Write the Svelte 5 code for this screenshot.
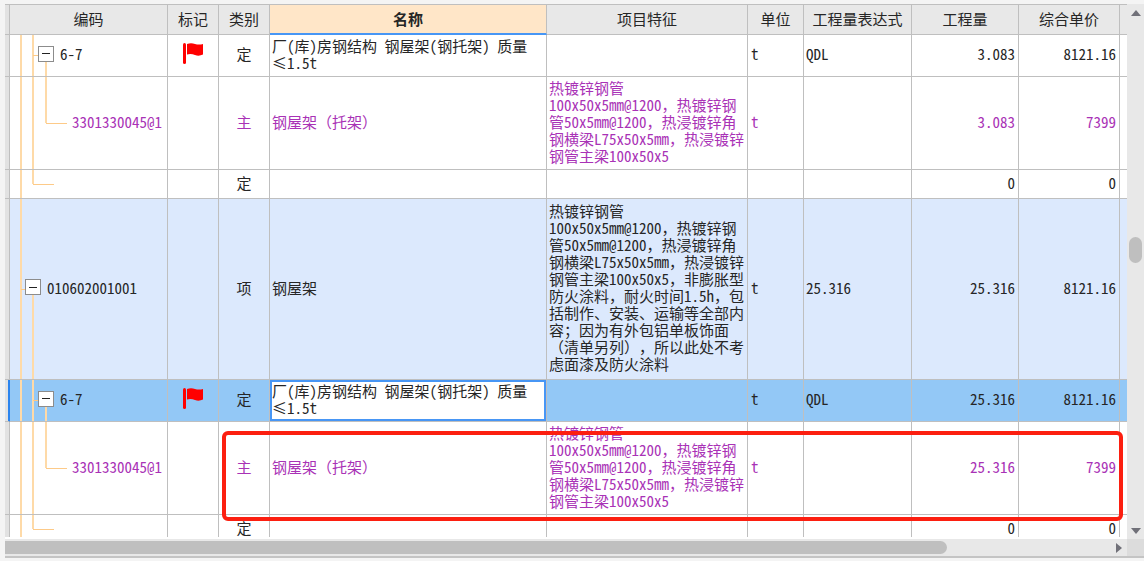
<script>
  const steel = [
    "热镀锌钢管",
    "100x50x5mm@1200，热镀锌钢",
    "管50x5mm@1200，热浸镀锌角",
    "钢横梁L75x50x5mm，热浸镀锌",
    "钢管主梁100x50x5",
  ];

  const steelFull = [
    ...steel.slice(0, 4),
    "钢管主梁100x50x5，非膨胀型",
    "防火涂料，耐火时间1.5h，包",
    "括制作、安装、运输等全部内",
    "容；因为有外包铝单板饰面",
    "（清单另列），所以此处不考",
    "虑面漆及防火涂料",
  ];

  const quota = ["厂(库)房钢结构 钢屋架(钢托架) 质量", "≤1.5t"];

  const columns = [
    { key: "code", label: "编码" },
    { key: "mark", label: "标记" },
    { key: "kind", label: "类别" },
    { key: "name", label: "名称" },
    { key: "feature", label: "项目特征" },
    { key: "unit", label: "单位" },
    { key: "expr", label: "工程量表达式" },
    { key: "amount", label: "工程量" },
    { key: "price", label: "综合单价" },
  ];

  let selected = $state(4);

  const rows = [
    { tree: "group", code: "6-7", flag: true, kind: "定", name: quota, feature: [], unit: "t", expr: "QDL", amount: "3.083", price: "8121.16" },
    { tree: "leaf", code: "3301330045@1", kind: "主", name: ["钢屋架（托架）"], feature: steel, unit: "t", expr: "", amount: "3.083", price: "7399" },
    { tree: "end", code: "", kind: "定", name: [], feature: [], unit: "", expr: "", amount: "0", price: "0" },
    { tree: "root", code: "010602001001", kind: "项", name: ["钢屋架"], feature: steelFull, unit: "t", expr: "25.316", amount: "25.316", price: "8121.16" },
    { tree: "group", code: "6-7", flag: true, kind: "定", name: quota, feature: [], unit: "t", expr: "QDL", amount: "25.316", price: "8121.16" },
    { tree: "leaf", code: "3301330045@1", kind: "主", name: ["钢屋架（托架）"], feature: steel, unit: "t", expr: "", amount: "25.316", price: "7399" },
    { tree: "end", code: "", kind: "定", name: [], feature: [], unit: "", expr: "", amount: "0", price: "0" },
  ];

  // x1, y1, x2, y2 of the guide lines in the code column
  const guides = {
    root: [[11, "0", 11, "100%"], [11, "50%", 16, "50%"], [23, "50%", 23, "100%"]],
    group: [[11, "0", 11, "100%"], [23, "0", 23, "100%"], [23, "50%", 28, "50%"], [36, "50%", 36, "100%"]],
    leaf: [[11, "0", 11, "100%"], [23, "0", 23, "100%"], [36, "0", 36, "50%"], [36, "50%", 57, "50%"]],
    end: [[11, "0", 11, "100%"], [23, "0", 23, "50%"], [23, "50%", 44, "50%"]],
  };

  // latin runs are set half width, chinese and its punctuation stay full width
  function runs(line) {
    return line.match(/[\x20-\x7e]+|[^\x20-\x7e]+/g) ?? [];
  }
</script>

{#snippet lines(list)}
  {#each list as line}
    <div class="line">{#each runs(line) as run}<span class:half={run.charCodeAt(0) < 127}>{run}</span>{/each}</div>
  {/each}
{/snippet}

<main class="app">
  <div class="body">
    <div class="pane">
      <table>
        <colgroup>
          <col class="w-gutter" />
          {#each columns as col}
            <col class="w-{col.key}" />
          {/each}
          <col class="w-rest" />
        </colgroup>
        <thead>
          <tr>
            <th class="gutter"></th>
            {#each columns as col}
              <th class:active={col.key === "name"}>{col.label}</th>
            {/each}
            <th></th>
          </tr>
        </thead>
        <tbody>
          {#each rows as row, i}
            <tr class={row.tree} class:selected={selected === i} onclick={() => (selected = i)}>
              <td class="gutter"></td>
              <td class="code half">
                <svg class="guides" aria-hidden="true">
                  {#each guides[row.tree] as [x1, y1, x2, y2]}
                    <line {x1} {y1} {x2} {y2} class:upright={x1 === x2} />
                  {/each}
                </svg>
                <div class="node">
                  {#if row.tree === "group" || row.tree === "root"}
                    <button class="toggle" type="button" aria-label="折叠"></button>
                  {/if}
                  <span>{row.code}</span>
                </div>
              </td>
              <td class="center">
                {#if row.flag}
                  <svg class="flag" viewBox="0 0 20 21" aria-hidden="true">
                    <path d="M0 1.500Q0 0 1.500 0Q3 0 3 1.500V19.500Q3 21 1.500 21Q0 21 0 19.500Z" />
                    <path d="M4 1Q8 -0.500 12 1Q16 2 20 1V11.500Q16 13.500 12 12Q8 10.500 4 11.500Z" />
                  </svg>
                {/if}
              </td>
              <td class="center">{row.kind}</td>
              <td class="name">{@render lines(row.name)}</td>
              <td>{@render lines(row.feature)}</td>
              <td class="unit half">{row.unit}</td>
              <td class="half">{row.expr}</td>
              <td class="number half">{row.amount}</td>
              <td class="number half">{row.price}</td>
              <td></td>
            </tr>
          {/each}
        </tbody>
      </table>
      <div class="highlight"></div>
    </div>
    <div class="vbar">
      <button type="button" aria-label="向上"><svg viewBox="0 0 10 6"><path d="M0 6L5 0L10 6Z" /></svg></button>
      <div class="vtrack"><div class="vthumb"></div></div>
      <button type="button" aria-label="向下"><svg viewBox="0 0 10 6"><path d="M0 0L5 6L10 0Z" /></svg></button>
    </div>
  </div>
  <div class="hbar">
    <div class="htrack">
      <div class="hthumb"></div>
      <button type="button" aria-label="向右"><svg class="right" viewBox="0 0 6 10"><path d="M0 0L6 5L0 10Z" /></svg></button>
    </div>
    <div class="corner"></div>
  </div>
</main>

<style>
  :global(body) {
    margin: 0;
    background: #f4f4f4;
  }

  .app {
    display: flex;
    flex-direction: column;
    height: 100vh;
    box-sizing: border-box;
    padding: 4px 0 3px 5px;
    font-family: "Noto Sans CJK SC", sans-serif;
    font-size: 15px;
    line-height: 17px;
    text-spacing-trim: space-all;
    color: #262626;
  }

  .body {
    flex: 1;
    min-height: 0;
    display: flex;
  }

  .pane {
    position: relative;
    flex: 1;
    overflow: hidden;
    box-sizing: border-box;
    border-top: 1px solid #bfbfbf;
    border-bottom: 2px solid #fff;
    background: #fff;
  }

  table {
    width: 100%;
    table-layout: fixed;
    border-collapse: separate;
    border-spacing: 0;
  }

  .w-gutter { width: 5px; }
  .w-code { width: 158px; }
  .w-mark,
  .w-kind { width: 51px; }
  .w-feature { width: 201px; }
  .w-unit { width: 56px; }
  .w-expr { width: 108px; }
  .w-amount { width: 107px; }
  .w-price { width: 101px; }
  .w-rest { width: 7px; }

  th,
  td {
    box-sizing: border-box;
    padding: 0 3px 4px 2px;
    border-right: 1px solid #bfbfbf;
    border-bottom: 1px solid #bfbfbf;
    text-align: left;
    vertical-align: middle;
    white-space: nowrap;
  }

  th:last-child,
  td:last-child {
    border-right: 0;
    padding: 0;
  }

  th {
    height: 30px;
    padding: 0 0 2px;
    background: #e8e8e8;
    font-weight: normal;
    text-align: center;
  }

  th.active {
    background: #ffe6c8;
    border-bottom: 2px solid #4796f5;
    font-weight: bold;
  }

  .gutter {
    padding: 0;
    background: #e2e2e2;
  }

  .group td { height: 42px; }
  .leaf td { height: 93px; }
  .end td { height: 29px; }
  .root td { height: 181px; }

  .leaf {
    color: #a932b6;
  }

  .root td:not(.gutter) {
    background: #dce9fd;
  }

  .selected td:not(.gutter) {
    background: #93c8f6;
  }

  .selected .gutter {
    border-right-color: #2b84ee;
    box-shadow: inset -1px 0 #2b84ee;
  }

  .selected td.name {
    background: #fff;
    box-shadow: inset 0 0 0 2px #4796f5;
  }

  .half {
    font-feature-settings: "hwid";
  }

  .line {
    white-space: pre;
  }

  .center {
    padding: 0 0 4px;
    text-align: center;
  }

  .number {
    text-align: right;
  }

  .unit {
    padding-left: 3px;
  }

  .code {
    position: relative;
    padding: 0 0 4px;
  }

  .guides {
    position: absolute;
    inset: 0;
    width: 100%;
    height: 100%;
  }

  .guides line {
    stroke: #fdca88;
    stroke-width: 1;
    shape-rendering: crispEdges;
  }

  .guides line.upright {
    stroke: #fedaa8;
    stroke-width: 2;
  }

  .node {
    position: relative;
    display: flex;
    align-items: center;
    gap: 6px;
  }

  .root .node { padding-left: 15px; }
  .group .node { padding-left: 28px; }
  .leaf .node { padding-left: 62px; }

  .toggle {
    display: flex;
    align-items: center;
    justify-content: center;
    width: 16px;
    height: 16px;
    padding: 0;
    border: 1px solid #8c8c8c;
    background: #fff;
  }

  .toggle::before {
    content: "";
    width: 8px;
    height: 1px;
    background: #222;
  }

  .flag {
    display: block;
    width: 20px;
    height: 21px;
    margin: 0 auto;
    fill: #f00;
  }

  .highlight {
    position: absolute;
    top: 426px;
    left: 217px;
    right: 4px;
    height: 90px;
    box-sizing: border-box;
    border: 4px solid #fc1f10;
    border-radius: 6px;
    pointer-events: none;
  }

  .vbar {
    display: flex;
    flex-direction: column;
    width: 17px;
    background: #e8e8e8;
  }

  .vtrack {
    flex: 1;
    display: flex;
    flex-direction: column;
    align-items: center;
  }

  .vtrack::before {
    content: "";
    flex: 5;
  }

  .vtrack::after {
    content: "";
    flex: 6;
  }

  .vthumb {
    width: 13px;
    height: 26px;
    border-radius: 7px;
    background: #bfbfbf;
  }

  .vbar button,
  .hbar button {
    display: flex;
    align-items: center;
    justify-content: center;
    width: 17px;
    height: 17px;
    padding: 0;
    border: 0;
    background: none;
  }

  button svg {
    width: 10px;
    height: 6px;
    fill: #707078;
  }

  button svg.right {
    width: 6px;
    height: 10px;
  }

  .hbar {
    display: flex;
    height: 17px;
    border-bottom: 2px solid #c4c4c4;
    background: #e8e8e8;
  }

  .htrack {
    flex: 1;
    display: flex;
    align-items: center;
    justify-content: space-between;
  }

  .hthumb {
    width: 84%;
    height: 13px;
    border-radius: 0 7px 7px 0;
    background: #bfbfbf;
  }

  .corner {
    width: 17px;
    background: #dcdcdc;
  }
</style>
